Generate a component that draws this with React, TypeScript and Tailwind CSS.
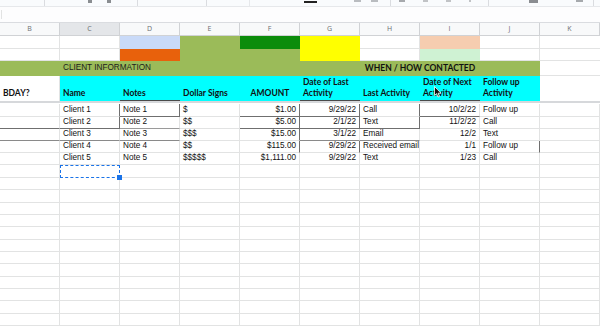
import React from "react";

type Cell = {
  text?: string;
  right?: boolean;
  cls?: string;
};

const GRID = "border-[#e2e3e3]";

const letters = ["B", "C", "D", "E", "F", "G", "H", "I", "J", "K"];

const dataRows: Cell[][] = [
  [
    {},
    { text: "Client 1", cls: "border-r-[#6f6f6f]" },
    { text: "Note 1", cls: "border-r-[#6f6f6f] border-b-[#6f6f6f]" },
    { text: "$" },
    { text: "$1.00", right: true, cls: "border-r-[#6f6f6f] border-b-[#6f6f6f]" },
    { text: "9/29/22", right: true, cls: "border-r-[#6f6f6f] border-b-[#6f6f6f]" },
    { text: "Call", cls: "border-r-[#6f6f6f]" },
    { text: "10/2/22", right: true, cls: "border-b-[#6f6f6f]" },
    { text: "Follow up" },
    {},
  ],
  [
    { cls: "border-b-[#6f6f6f]" },
    { text: "Client 2", cls: "border-r-[#6f6f6f] border-b-[#6f6f6f]" },
    { text: "Note 2", cls: "border-b-[#9a9a9a]" },
    { text: "$$" },
    { text: "$5.00", right: true, cls: "border-r-[#6f6f6f] border-b-[#6f6f6f]" },
    { text: "2/1/22", right: true, cls: "border-r-[#6f6f6f] border-b-[#6f6f6f]" },
    { text: "Text", cls: "border-r-[#6f6f6f] border-b-[#6f6f6f]" },
    { text: "11/2/22", right: true },
    { text: "Call" },
    {},
  ],
  [
    { cls: "border-b-[#8a8a8a]" },
    { text: "Client 3", cls: "border-b-[#8a8a8a]" },
    { text: "Note 3", cls: "border-b-[#8a8a8a]" },
    { text: "$$$" },
    { text: "$15.00", right: true, cls: "border-r-[#6f6f6f]" },
    { text: "3/1/22", right: true, cls: "border-b-[#8a8a8a]" },
    { text: "Email", cls: "border-b-[#8a8a8a]" },
    { text: "12/2", right: true },
    { text: "Text" },
    {},
  ],
  [
    {},
    { text: "Client 4" },
    { text: "Note 4" },
    { text: "$$" },
    { text: "$115.00", right: true, cls: "border-r-[#6f6f6f]" },
    { text: "9/29/22", right: true, cls: "border-r-[#6f6f6f]" },
    { text: "Received email about it" },
    { text: "1/1", right: true },
    { text: "Follow up", cls: "border-r-[#6f6f6f]" },
    {},
  ],
  [
    {},
    { text: "Client 5" },
    { text: "Note 5" },
    { text: "$$$$$" },
    { text: "$1,111.00", right: true },
    { text: "9/29/22", right: true },
    { text: "Text" },
    { text: "1/23", right: true },
    { text: "Call" },
    {},
  ],
];

const rowHeights = [13, 12, 12, 12, 12, 13, 12, 13, 12, 12, 13, 12, 12, 13, 12, 12, 13, 12];

const Cursor = () => (
  <svg
    width="8"
    height="12"
    viewBox="0 0 8 12"
    className="absolute left-[434px] top-[86px] z-20"
  >
    <path d="M0.5 0.5 L0.5 9.5 L2.6 7.6 L4 11 L5.4 10.4 L4.1 7.2 L7 7.2 Z" fill="#111" stroke="#fff" strokeWidth="0.8" />
  </svg>
);

const DataCell = ({ cell }: { cell: Cell }) => (
  <div
    className={`flex items-center overflow-hidden whitespace-nowrap border-r border-b ${GRID} px-[3px] ${
      cell.right ? "justify-end" : "justify-start"
    } ${cell.cls ?? ""}`}
  >
    {cell.text}
  </div>
);

export default function App() {
  return (
    <div className="relative h-[326px] w-[600px] overflow-hidden bg-white font-['Liberation_Sans',Arial,sans-serif] text-[#111]">
      {/* toolbar, cut off at the top */}
      <div className="flex h-[7px] items-start bg-[#f9fbfd] border-b border-[#e6e8eb]">
        <div className="h-full w-[45px] border-r border-[#dadce0]" />
        <div className="flex h-full w-[93px] gap-[15px] border-r border-[#dadce0] pl-[43px]">
          <span className="h-[3px] w-[4px] bg-[#8a8d91]" />
          <span className="h-[3px] w-[4px] bg-[#8a8d91]" />
        </div>
        <div className="h-full w-[69px] border-r border-[#dadce0]" />
        <div className="h-full w-[43px] border-r border-[#e6e8eb]" />
        <div className="h-full w-[54px]" />
        <div className="flex h-full w-[45px] pt-[1px]">
          <span className="h-[2px] w-[13px] bg-[#222]" />
        </div>
        <div className="flex h-full w-[42px] gap-[10px] border-r border-[#dadce0] pl-[5px]">
          <span className="h-[2px] w-[7px] bg-[#b9bcc0]" />
          <span className="h-[2px] w-[7px] bg-[#b9bcc0]" />
        </div>
        <div className="flex h-full w-[98px] gap-[18px] border-r border-[#dadce0] pl-[8px]">
          <span className="h-[2px] w-[6px] bg-[#a6a9ad]" />
          <span className="h-[2px] w-[5px] bg-[#c1c3c6]" />
          <span className="h-[2px] w-[5px] bg-[#c1c3c6]" />
          <span className="h-[2px] w-[2px] bg-[#c1c3c6]" />
        </div>
        <div className="flex h-full w-[60px] pl-[40px]">
          <span className="h-[3px] w-[9px] bg-[#8a8d91]" />
        </div>
        <div className="flex h-full w-[45px] border-r border-[#dadce0] pl-[27px]">
          <span className="h-[2px] w-[7px] bg-[#a6a9ad]" />
        </div>
      </div>

      {/* formula bar */}
      <div className="flex h-[15px] bg-[#fdfdfe]">
        <div className="mt-[3px] h-[9px] w-[2px] border-r border-[#e2e3e3]" />
      </div>

      {/* column letters */}
      <div className="grid h-[14px] grid-cols-[repeat(10,60px)] border-t border-[#dadce0]">
        {letters.map((l) => (
          <div
            key={l}
            className={`flex items-center justify-center border-r border-b border-[#d0d2d5] font-['Open_Sans',sans-serif] text-[7px] text-[#6b6e72] ${
              l === "C" ? "bg-[#e4e6e9]" : "bg-[#f8f9fa]"
            }`}
          >
            {l}
          </div>
        ))}
      </div>

      {/* row 1 – colour swatches */}
      <div className="grid h-[13px] grid-cols-[repeat(10,60px)]">
        <div className={`border-r border-b ${GRID}`} />
        <div className={`border-r border-b ${GRID}`} />
        <div className="bg-[#c9daf8]" />
        <div className="bg-[#9bbb59]" />
        <div className="bg-[#0b8c0b]" />
        <div className="bg-[#ffff00]" />
        <div className={`border-r border-b ${GRID}`} />
        <div className="bg-[#f6cdb0]" />
        <div className={`border-r border-b ${GRID}`} />
        <div className={`border-b ${GRID}`} />
      </div>

      {/* row 2 */}
      <div className="grid h-[12px] grid-cols-[repeat(10,60px)]">
        <div className={`border-r border-b ${GRID}`} />
        <div className={`border-r border-b ${GRID}`} />
        <div className="bg-[#e8610c]" />
        <div className="bg-[#9bbb59]" />
        <div className="bg-[#9bbb59]" />
        <div className="bg-[#ffff00]" />
        <div className={`border-r border-b ${GRID}`} />
        <div className="bg-[#cff2d3]" />
        <div className={`border-r border-b ${GRID}`} />
        <div className={`border-b ${GRID}`} />
      </div>

      {/* row 3 – section titles */}
      <div className="grid h-[15px] grid-cols-[repeat(10,60px)] text-[8.2px]">
        <div className="bg-[#9bbb59]" />
        <div className="col-span-4 flex items-center bg-[#9bbb59] px-[3px] text-[#1b1b1b]">
          CLIENT INFORMATION
        </div>
        <div className="col-span-4 flex items-center justify-center bg-[#9bbb59] font-['Lato',sans-serif] text-[8.5px] font-bold text-[#111]">
          WHEN / HOW CONTACTED
        </div>
        <div className={`border-b ${GRID}`} />
      </div>

      {/* row 4 – column headings */}
      <div className="grid h-[25px] grid-cols-[repeat(10,60px)] font-['Lato',sans-serif] text-[8.5px] font-bold leading-[11px] text-[#111]">
        <div className={`flex items-end border-r ${GRID} px-[3px] pb-[2px]`}>BDAY?</div>
        <div className="flex items-end bg-[#00ffff] px-[3px] pb-[2px]">Name</div>
        <div className="flex items-end border-b border-[#4a4a4a] bg-[#00ffff] px-[3px] pb-[1px]">Notes</div>
        <div className="flex items-end bg-[#00ffff] px-[3px] pb-[2px]">Dollar Signs</div>
        <div className="flex items-end justify-center bg-[#00ffff] px-[3px] pb-[2px]">AMOUNT</div>
        <div className="flex items-end border-b border-[#4a4a4a] bg-[#00ffff] px-[3px] pb-[1px]">
          Date of Last
          <br />
          Activity
        </div>
        <div className="flex items-end bg-[#00ffff] px-[3px] pb-[2px]">Last Activity</div>
        <div className="flex items-end border-b border-[#4a4a4a] bg-[#00ffff] px-[3px] pb-[1px]">
          Date of Next
          <br />
          Activity
        </div>
        <div className="flex items-end bg-[#00ffff] px-[3px] pb-[2px]">
          Follow up
          <br />
          Activity
        </div>
        <div />
      </div>

      {/* frozen row divider */}
      <div className="h-[3px] border-t-2 border-[#d6d8db] bg-white" />

      {/* data rows */}
      <div className="text-[8.2px]">
        {rowHeights.map((h, i) => {
          const row = dataRows[i];
          return (
            <div
              key={i}
              className="grid grid-cols-[repeat(10,60px)]"
              style={{ height: h }}
            >
              {row
                ? row.map((c, j) => <DataCell key={j} cell={c} />)
                : letters.map((l) =>
                    i === 5 && l === "C" ? (
                      <div
                        key={l}
                        className="relative border-[1.5px] border-dashed border-[#1a73e8] bg-white"
                      >
                        <span className="absolute -right-[3px] -bottom-[3px] h-[5px] w-[5px] bg-[#1a73e8]" />
                      </div>
                    ) : (
                      <div key={l} className={`border-r border-b ${GRID}`} />
                    )
                  )}
            </div>
          );
        })}
      </div>

      <Cursor />
    </div>
  );
}
